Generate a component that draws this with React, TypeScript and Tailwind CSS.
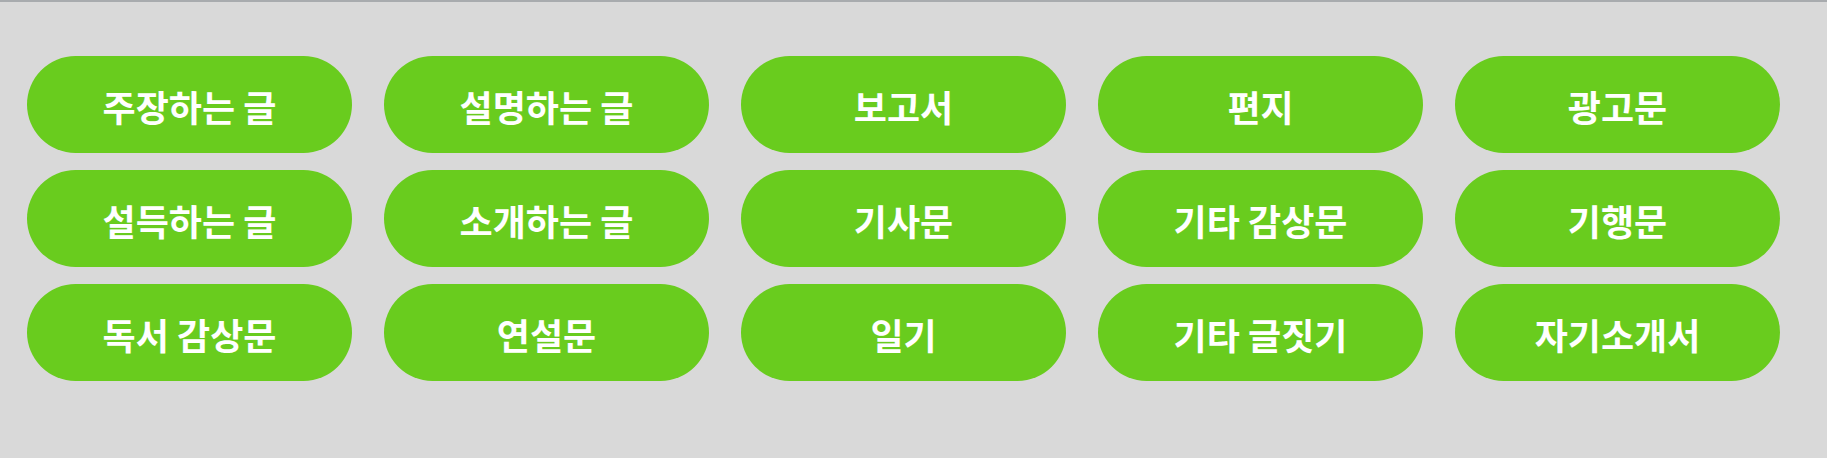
import React from "react";

const items = [
  "주장하는 글",
  "설명하는 글",
  "보고서",
  "편지",
  "광고문",
  "설득하는 글",
  "소개하는 글",
  "기사문",
  "기타 감상문",
  "기행문",
  "독서 감상문",
  "연설문",
  "일기",
  "기타 글짓기",
  "자기소개서",
];

export default function App() {
  return (
    <div
      className="w-[1827px] h-[458px] bg-[#d9d9d9] border-t-2 border-[#a8abae] overflow-hidden"
      style={{ fontFamily: '"Noto Sans CJK KR", "Noto Sans", sans-serif' }}
    >
      <div className="grid grid-cols-[repeat(5,325px)] gap-x-[32px] gap-y-[17px] pl-[27px] pt-[54px]">
        {items.map((t) => (
          <button
            key={t}
            className="h-[97px] rounded-full bg-[#69cc1e] text-white font-bold text-[36px] leading-none pt-[2px] flex items-center justify-center"
          >
            {t}
          </button>
        ))}
      </div>
    </div>
  );
}
